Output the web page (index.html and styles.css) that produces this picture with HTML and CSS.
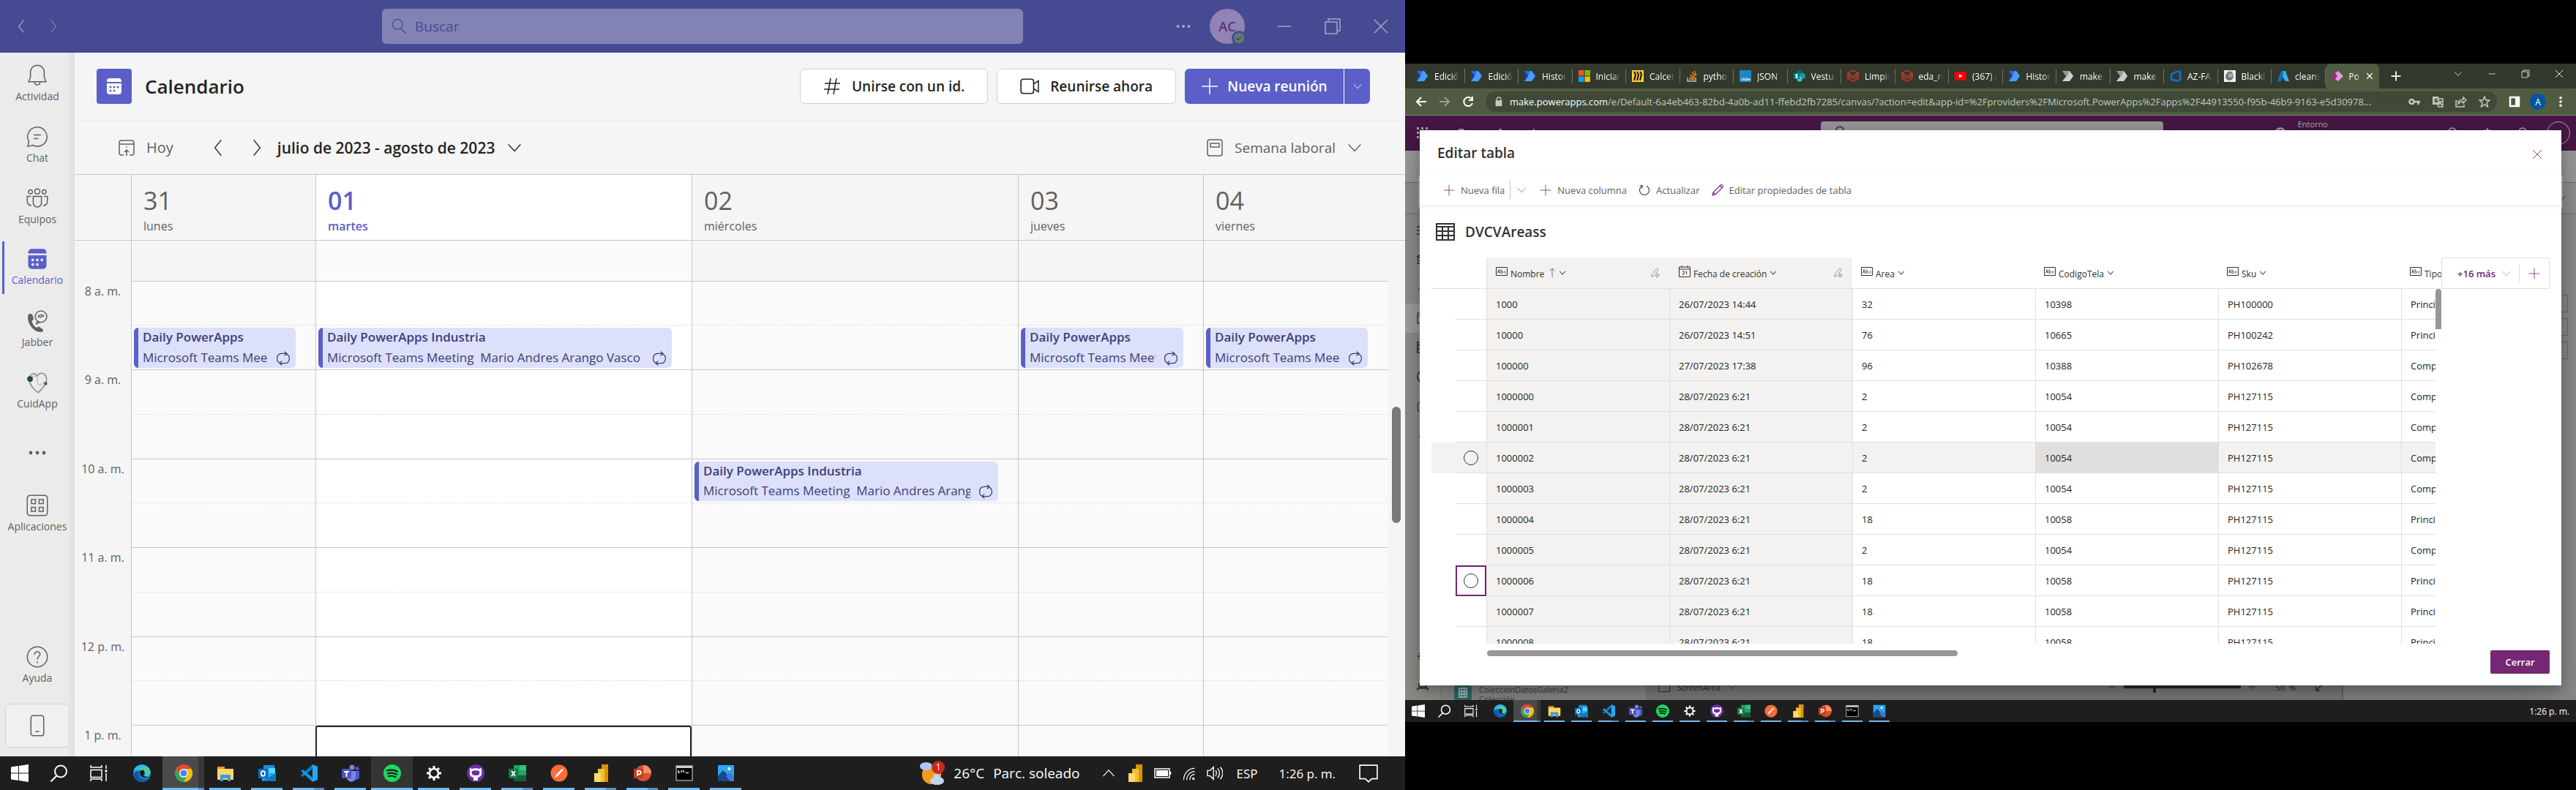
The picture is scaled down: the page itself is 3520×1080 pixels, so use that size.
FILE: index.html
```html
<!DOCTYPE html>
<html lang="es">
<head>
<meta charset="utf-8">
<title>Calendario y Power Apps</title>
<link rel="stylesheet" href="styles.css">
</head>
<body>
<svg class="sprite" aria-hidden="true">
  <symbol id="left" viewBox="0 0 24 24"><path d="M16 2 8 12l8 10"/></symbol>
  <symbol id="right" viewBox="0 0 24 24"><path d="m8 2 8 10-8 10"/></symbol>
  <symbol id="down" viewBox="0 0 24 24"><path d="m3 7 9 10 9-10"/></symbol>
  <symbol id="up" viewBox="0 0 24 24"><path d="m3 17 9-10 9 10"/></symbol>
  <symbol id="plus" viewBox="0 0 24 24"><path d="M12 1v22M1 12h22"/></symbol>
  <symbol id="close" viewBox="0 0 24 24"><path d="m3 3 18 18M21 3 3 21"/></symbol>
  <symbol id="minus" viewBox="0 0 24 24"><path d="M3 12h18"/></symbol>
  <symbol id="restore" viewBox="0 0 24 24"><path d="M2 6h16v16H2zM6 6V2h16v16h-4"/></symbol>
  <symbol id="search" viewBox="0 0 24 24"><circle cx="10" cy="9" r="7.5"/><path d="m15 15 8 8"/></symbol>
  <symbol id="dots" viewBox="0 0 24 24"><g fill="currentColor" stroke="none"><circle cx="3" cy="12" r="2.4"/><circle cx="12" cy="12" r="2.4"/><circle cx="21" cy="12" r="2.4"/></g></symbol>
  <symbol id="vdots" viewBox="0 0 24 24"><g fill="currentColor" stroke="none"><circle cx="12" cy="3" r="3"/><circle cx="12" cy="12" r="3"/><circle cx="12" cy="21" r="3"/></g></symbol>
  <symbol id="bell" viewBox="0 0 24 24"><path d="M12 1c-4.500 0-7.500 3.400-7.500 7.500V14L2.500 19h19l-2-5V8.500C19.500 4.400 16.500 1 12 1zM9 19c0 2 1.200 3.500 3 3.500s3-1.500 3-3.500"/></symbol>
  <symbol id="chat" viewBox="0 0 24 24"><path d="M12 1.500a10.500 10.500 0 1 1-5 19.700L1.500 22.500l1.300-5.300A10.500 10.500 0 0 1 12 1.500zM8 10h8M8 14h5"/></symbol>
  <symbol id="people" viewBox="0 0 24 24"><circle cx="12" cy="4.500" r="2.800"/><circle cx="4.500" cy="5" r="2.200"/><circle cx="19.500" cy="5" r="2.200"/><path d="M7.500 10h9v7a4.500 4.500 0 0 1-9 0zM5 10H1v5.500a4.500 4.500 0 0 0 4.500 4.500M19 10h4v5.500a4.500 4.500 0 0 1-4.500 4.500"/></symbol>
  <symbol id="cal" viewBox="0 0 24 24"><path d="M2 6V5a4 4 0 0 1 4-4h12a4 4 0 0 1 4 4v1zM2 8h20v11a4 4 0 0 1-4 4H6a4 4 0 0 1-4-4z" fill="currentColor" stroke="none"/><g fill="var(--dot)" stroke="none"><circle cx="7" cy="13" r="1.500"/><circle cx="12" cy="13" r="1.500"/><circle cx="17" cy="13" r="1.500"/><circle cx="7" cy="18" r="1.500"/><circle cx="12" cy="18" r="1.500"/></g></symbol>
  <symbol id="phone" viewBox="0 0 24 24"><path d="M2 5c2-2 5-1 5 1l1 4-2 2c1 4 3 6 5 7l3-1 4 3c1 1 0 3-2 3C7 24 0 13 2 5z" fill="currentColor" stroke="none"/><circle cx="16" cy="7" r="6.300"/><path d="m12 12-1 3 4-2M13 8c0-3 5-4 6-1M14 8l4-1"/></symbol>
  <symbol id="care" viewBox="0 0 24 24"><path d="M3 7c2-6 7-6 9-2 2-4 8-5 10 2 1 6-4 11-9 16C7 19 3 13 3 7z" stroke="#8b8b8b" stroke-width="1.200"/><path d="M6 7c2-4 6-3 6 2s3 9 6 3" stroke="#c0c0c0"/><circle cx="4" cy="8" r="2.500" fill="#1d5560" stroke="#1b3b40"/><circle cx="21" cy="13" r="1.300" fill="#555"/></symbol>
  <symbol id="apps" viewBox="0 0 24 24"><rect x="1" y="1" width="22" height="22" rx="3"/><rect x="5.500" y="5.500" width="4.500" height="4.500"/><rect x="14" y="5.500" width="4.500" height="4.500"/><rect x="5.500" y="14" width="4.500" height="4.500"/><rect x="14" y="14" width="4.500" height="4.500"/></symbol>
  <symbol id="help" viewBox="0 0 24 24"><circle cx="12" cy="12" r="11"/><path d="M9 9.500c0-4 6-4 6-.5 0 2.500-3 2.500-3 6M12 17v1.800"/></symbol>
  <symbol id="mobile" viewBox="0 0 24 24"><rect x="5" y="1" width="14" height="22" rx="2.500"/><path d="M10 18.500h4"/></symbol>
  <symbol id="today" viewBox="0 0 24 24"><path d="M8 22H5a3 3 0 0 1-3-3V5a3 3 0 0 1 3-3h14a3 3 0 0 1 3 3v14a3 3 0 0 1-3 3h-3M2 7h20M12 23v-8M9 18l3-3 3 3M12 10v1.500"/></symbol>
  <symbol id="week" viewBox="0 0 24 24"><rect x="2" y="1" width="20" height="22" rx="3"/><path d="M6 6h12v5H6z"/></symbol>
  <symbol id="hash" viewBox="0 0 24 24"><path d="M10 1 6 23M18 1l-4 22M2 8h21M1 16h21"/></symbol>
  <symbol id="camera" viewBox="0 0 24 24"><rect x="1" y="3" width="16" height="18" rx="3"/><path d="m17 9 6-4v14l-6-4"/></symbol>
  <symbol id="repeat" viewBox="0 0 24 24"><path d="M7 19.500a6.500 6.500 0 0 1-5-6.500V11a7 7 0 0 1 7-7h8M14 1l4 3-4 4M17 5a7 7 0 0 1 5 7v1a7 7 0 0 1-7 7H7M10 16l-4 4 4 3"/></symbol>

  <symbol id="win" viewBox="0 0 24 24"><path d="m0 3.500 10-1.400V11.500H0zM11 2l13-2v11.500H11zM0 12.500h10V22L0 20.500zM11 12.500h13V24l-13-1.900z" fill="#fff" stroke="none"/></symbol>
  <symbol id="find" viewBox="0 0 24 24"><circle cx="14" cy="9.500" r="8" stroke="#fff" stroke-width="2"/><path d="m8.500 15.500-8 8" stroke="#fff" stroke-width="2"/></symbol>
  <symbol id="views" viewBox="0 0 24 24"><path d="M1 1v3h15V1M1 7.500h15v10H1zM1 23v-3h15v3M22 1v5M22 12v11" stroke="#fff" stroke-width="1.500"/><path d="M20.500 7.500h3v3h-3z" fill="#fff" stroke="none"/></symbol>
  <symbol id="edge" viewBox="0 0 24 24"><g stroke="none"><circle cx="12" cy="12" r="12" fill="#1585d8"/><path d="M1 8C4-1 21-3 23.500 10c.5 5-4 7-8 6 2-3 0-8-4-8C6 7 2 9 1 8z" fill="#4ccf9a"/><path d="M1 8c3-9 15-10 20-3C14 2 8 5 1 10z" fill="#2fb7e8"/><path d="M8 10c-2 7 3 12 12 10-6 7-18 4-19-6 1-4 5-5 7-4z" fill="#0e58a8"/><path d="M14 8c-5-1-6 3-4 7 3 4 8 4 13 2-4 1-9 0-9-3 2-1 2-4 0-6z" fill="#1c1c1c"/></g></symbol>
  <symbol id="chrome" viewBox="0 0 24 24"><g stroke="none"><circle cx="12" cy="12" r="12" fill="#34a853"/><path d="M1.600 6A12 12 0 0 1 22.400 6H12a6 6 0 0 0-5.500 8z" fill="#ea4335"/><path d="M22.400 6A12 12 0 0 1 12 24l5.200-9A6 6 0 0 0 12 6z" fill="#fbbc05"/><circle cx="12" cy="12" r="6" fill="#fff"/><circle cx="12" cy="12" r="4.600" fill="#4285f4"/></g></symbol>
  <symbol id="folder" viewBox="0 0 24 24"><g stroke="none"><path d="M1 3h10v5H1z" fill="#e0a010"/><path d="M1 6h22v15H1z" fill="#ffd769"/><path d="M5 14h14v9h-4v-4h-6v4H5z" fill="#3f9bde"/></g></symbol>
  <symbol id="outlook" viewBox="0 0 24 24"><g stroke="none"><path d="M7 1h15v12H7z" fill="#1490df"/><path d="M14 5h9v7h-9z" fill="#50d9ff"/><path d="M5 12h19v11H5z" fill="#28a8ea"/><path d="m5 23 19-11v11z" fill="#0f78c8"/><path d="M0 6h13v13H0z" fill="#0f6cbd"/><ellipse cx="6.500" cy="12.500" rx="2.600" ry="3.300" fill="none" stroke="#fff" stroke-width="1.800"/></g></symbol>
  <symbol id="vscode" viewBox="0 0 24 24"><g stroke="none"><path d="m17 0 7 3v18l-7 3z" fill="#25a9f2"/><path d="M17 0v6L4 17l-3-2z" fill="#0a7bc7"/><path d="M17 24v-6L4 7 1 9z" fill="#1593dd"/></g></symbol>
  <symbol id="teams" viewBox="0 0 24 24"><g stroke="none"><circle cx="14" cy="4" r="3.500" fill="#7b83eb"/><circle cx="21" cy="5.500" r="2.500" fill="#5059c9"/><path d="M17 9h7v8c0 4-5 5-7 3z" fill="#5059c9"/><path d="M7 9h12v9c0 8-12 7-12 0z" fill="#7b83eb"/><path d="M0 6h13v13H0z" fill="#4b53bc"/><path d="M3 9h7v2H7.500v6h-2v-6H3z" fill="#fff"/></g></symbol>
  <symbol id="spotify" viewBox="0 0 24 24"><circle cx="12" cy="12" r="12" fill="#1ed760" stroke="none"/><path d="M5 8.500c5-1.600 10-1 14 1.300M6 12.500c4-1.200 8.500-.8 12 1.200M7 16.200c3.500-.9 6.500-.5 9.500 1" stroke="#191919" stroke-width="2.200" stroke-linecap="round"/></symbol>
  <symbol id="gear" viewBox="0 0 24 24"><circle cx="12" cy="12" r="6" stroke="currentColor" stroke-width="2.500"/><path d="M12 2v4M12 18v4M2 12h4M18 12h4M5 5l3 3M16 16l3 3M19 5l-3 3M8 16l-3 3" stroke="currentColor" stroke-width="3"/></symbol>
  <symbol id="github" viewBox="0 0 24 24"><circle cx="12" cy="12" r="12" fill="#6e2ca3" stroke="none"/><path d="M9 22v-4c-4-1-6-4-5-8V5l3 1c3-1 7-1 10 0l3-1v5c1 4-1 7-5 8v4z" fill="#fff" stroke="none"/><path d="M7 9c3-1 7-1 10 0 1 4 0 6-5 6s-6-2-5-6z" fill="#6e2ca3" stroke="none"/></symbol>
  <symbol id="excel" viewBox="0 0 24 24"><g stroke="none"><path d="M7 1h17v22H7z" fill="#21a366"/><path d="M15 1h9v7h-9z" fill="#33c481"/><path d="M7 15h17v8H7z" fill="#185c37"/><path d="M0 6h13v13H0z" fill="#107c41"/></g><path d="m4 9 5 7M9 9l-5 7" stroke="#fff" stroke-width="1.800"/></symbol>
  <symbol id="postman" viewBox="0 0 24 24"><circle cx="12" cy="12" r="11.500" fill="#ff6c37" stroke="none"/><path d="m6 18 2-4 8-8 2 1-8 9z" fill="#fff" stroke="none"/></symbol>
  <symbol id="powerbi" viewBox="0 0 24 24"><g stroke="none"><path d="M13 0h9v24h-9z" fill="#d9920a"/><path d="M8 6h9v18H8z" fill="#f0c02c"/><path d="M3 12h9v12H3z" fill="#f9dc6c"/></g></symbol>
  <symbol id="ppt" viewBox="0 0 24 24"><g stroke="none"><circle cx="13" cy="12" r="11" fill="#d35230"/><path d="M13 1a11 11 0 0 1 11 11H13z" fill="#ff8f6b"/><path d="M0 6h13v13H0z" fill="#c43e1c"/></g><path d="M5 16V9h2.500a2 2 0 0 1 0 4.500H5" stroke="#fff" stroke-width="1.800"/></symbol>
  <symbol id="cmd" viewBox="0 0 24 24"><path d="M1 2h22v20H1z" fill="#000" stroke="#9a9a9a"/><path d="M1 2h22v3H1z" fill="#cfcfcf" stroke="none"/><path d="M4 8v3h2M8 8v3M10 8l2 3M14 11.500h4" stroke="#ddd"/></symbol>
  <symbol id="photos" viewBox="0 0 24 24"><g stroke="none"><path d="M1 1h22v22H1z" fill="#2aa7ee"/><path d="m1 16 7-8 15 15H1z" fill="#164a8b"/><path d="m12 16 5-5 6 5v7h-5z" fill="#4076d8"/><circle cx="16.500" cy="6" r="2" fill="#fff"/></g></symbol>

  <symbol id="weather" viewBox="0 0 36 36"><g stroke="none"><circle cx="18" cy="20" r="14" fill="#f59a1c"/><ellipse cx="10" cy="8" rx="9" ry="6" fill="#a9c9f2"/><ellipse cx="26" cy="29" rx="10" ry="6" fill="#bfd6f6"/><circle cx="25" cy="24" r="5" fill="#bfd6f6"/></g></symbol>
  <symbol id="battery" viewBox="0 0 24 24"><path d="M1 6h20v12H1zM22.500 10v4"/><path d="M3 8h16v8H3z" fill="currentColor" stroke="none"/></symbol>
  <symbol id="wifi" viewBox="0 0 24 24"><path d="M3 23C3 12 11 4 21 4M8 23c0-8 6-14 13-14M13 23c0-5 3-9 8-9"/><circle cx="19" cy="21" r="2" fill="currentColor" stroke="none"/></symbol>
  <symbol id="sound" viewBox="0 0 24 24"><path d="M1 8h4l5-5v18l-5-5H1zM13 8c2 2 2 6 0 8M16 5c4 4 4 10 0 14M20 3c5 5 5 13 0 18"/></symbol>
  <symbol id="note" viewBox="0 0 24 24"><path d="M1 2h22v17h-7l-4 4-4-4H1z"/></symbol>

  <symbol id="flow" viewBox="0 0 16 16"><g stroke="none"><path d="M0 1h10l5 7-5 7H0l5-7z" fill="#1f6bf0"/><path d="M5 8 8 1h2l5 7-5 7H0z" fill="#4a9bff"/><path d="m0 1 5 7-3 4-2 3z" fill="#1240b8" opacity=".6"/></g></symbol>
  <symbol id="flowgrey" viewBox="0 0 16 16"><g stroke="none"><path d="M0 1h10l5 7-5 7H0l5-7z" fill="#9a9a9a"/><path d="m10 1 5 7-5 7H0l7-7z" fill="#cfcfcf"/></g></symbol>
  <symbol id="ms" viewBox="0 0 16 16"><g stroke="none"><path d="M0 0h7.500v7.500H0z" fill="#f25022"/><path d="M8.500 0H16v7.500H8.500z" fill="#7fba00"/><path d="M0 8.500h7.500V16H0z" fill="#00a4ef"/><path d="M8.500 8.500H16V16H8.500z" fill="#ffb900"/></g></symbol>
  <symbol id="miro" viewBox="0 0 16 16"><path d="M0 0h16v16H0z" fill="#ffd02f" stroke="none"/><path d="m3 2 2 4-2 8M7 2l2 4-2 8M11 2l2 3-2 9" stroke="#111" stroke-width="2"/></symbol>
  <symbol id="stack" viewBox="0 0 16 16"><path d="M2 10v5h11v-5" stroke="#bcbbbb" stroke-width="1.500"/><path d="M4 12.500h7M4.500 10l7 1M5.500 6.500l6 3M8 3l5 5M11 1l3 6" stroke="#f48024" stroke-width="1.500"/></symbol>
  <symbol id="json" viewBox="0 0 16 16"><path d="M0 0h16v16H0z" fill="#1d86c8" stroke="none"/><path d="M3 11v3H2M7 11H5v1.500h2V14H5M8.500 11h2v3h-2zM12 14v-3l2 3v-3" stroke="#fff" stroke-width=".8"/></symbol>
  <symbol id="sharepoint" viewBox="0 0 16 16"><g stroke="none"><circle cx="8" cy="5" r="5" fill="#036c70"/><circle cx="12" cy="8" r="4" fill="#1a9ba1"/><circle cx="8" cy="12" r="3.500" fill="#37c6d0"/><path d="M0 4h8v8H0z" fill="#03787c"/></g><path d="M5.500 6C3 5 2 7 4 8s1 3-1.500 2" stroke="#fff"/></symbol>
  <symbol id="bricks" viewBox="0 0 16 16"><path d="m1 4 7 4 7-4-7-4zM1 4v3l7 4 7-4V4M1 8v3l7 4 7-4V8" stroke="#d83b2b" stroke-width="1.400"/></symbol>
  <symbol id="youtube" viewBox="0 0 16 16"><rect y="2" width="16" height="12" rx="3" fill="#f00" stroke="none"/><path d="M6 5.500v5L11 8z" fill="#fff" stroke="none"/></symbol>
  <symbol id="devops" viewBox="0 0 16 16"><path d="M14 2v11l-4 2-5-2H2V6l7-4z" stroke="#0078d7" stroke-width="2.500"/></symbol>
  <symbol id="bb" viewBox="0 0 16 16"><path d="M0 0h16v16H0z" fill="#f2f2f2" stroke="none"/><path d="M4 4c3-4 8-3 8 1 3 5-1 9-5 9S0 9 4 4z" fill="#777" stroke="none"/><circle cx="9" cy="7" r="3" fill="#aaa" stroke="none"/></symbol>
  <symbol id="azure" viewBox="0 0 16 16"><g stroke="none"><path d="M5 1h4L5 15H0z" fill="#0f6fc0"/><path d="M8 1h3l5 14h-5L7 9z" fill="#35b1f0"/></g></symbol>
  <symbol id="papps" viewBox="0 0 16 16"><g stroke="none"><path d="m6 1 5 7-5 7-6-7z" fill="#a4268f"/><path d="m9 1 7 7-7 7-4-3 3-4-3-4z" fill="#e59ae0"/></g></symbol>

  <symbol id="aback" viewBox="0 0 16 16"><path d="M15 8H2M8 2 2 8l6 6"/></symbol>
  <symbol id="afwd" viewBox="0 0 16 16"><path d="M1 8h13M8 2l6 6-6 6"/></symbol>
  <symbol id="reload" viewBox="0 0 16 16"><path d="M13.500 5A6 6 0 1 0 14 10M14 1v5H9"/></symbol>
  <symbol id="lock" viewBox="0 0 16 16"><path d="M3 6h10v9H3z" fill="currentColor" stroke="none"/><path d="M5 7V4a3 3 0 0 1 6 0v3"/></symbol>
  <symbol id="key" viewBox="0 0 16 16"><circle cx="4.500" cy="8" r="3" stroke-width="2.500"/><path d="M8 8h8M13.500 8v4" stroke-width="2.500"/></symbol>
  <symbol id="translate" viewBox="0 0 16 16"><path d="M1 1h8l2 11H1z" fill="currentColor" stroke="none"/><path d="M9 4h6v11H9l-1-3M10 8h4M12 7v1c0 2-1 3-2 4M11 9l3 4"/><path d="M7.500 5a2 2 0 1 0 0 3V7H6" stroke="#404937"/></symbol>
  <symbol id="share" viewBox="0 0 16 16"><path d="M3 7H1v8h11v-3M4 11c0-4 3-6 7-6V2l4 4-4 4V8c-3 0-5 0-7 3z"/></symbol>
  <symbol id="star" viewBox="0 0 16 16"><path d="m8 1 2 5h5l-4 3.500L12.500 15 8 12l-4.500 3L5 9.500 1 6h5z"/></symbol>
  <symbol id="panel" viewBox="0 0 16 16"><path d="M2 2h12v12H2z" stroke-width="2.500"/><path d="M9 2h5v12H9z" fill="currentColor" stroke="none"/></symbol>
  <symbol id="waffle" viewBox="0 0 16 16"><g fill="currentColor" stroke="none"><path d="M0 0h3v3H0zM6 0h3v3H6zM12 0h3v3h-3zM0 6h3v3H0zM6 6h3v3H6zM12 6h3v3h-3zM0 12h3v3H0zM6 12h3v3H6zM12 12h3v3h-3z"/></g></symbol>
  <symbol id="globe" viewBox="0 0 16 16"><circle cx="8" cy="8" r="7"/><path d="M1 8h14M8 1c-5 4-5 10 0 14M8 1c5 4 5 10 0 14"/></symbol>
  <symbol id="ring" viewBox="0 0 16 16"><circle cx="8" cy="6" r="5"/><path d="M8 11v4"/></symbol>

  <symbol id="refresh" viewBox="0 0 16 16"><path d="M5 2.200A6.500 6.500 0 1 0 11 2.200M1.500 1.500H5v4"/></symbol>
  <symbol id="pencil" viewBox="0 0 16 16"><path d="m1 15 1-4L12 1c2-1 4 1 3 3L5 14zM11 2l3 3M2 11l3 3"/></symbol>
  <symbol id="grid" viewBox="0 0 26 24"><path d="M1 1h24v22H1zM1 5h24M1 11h24M1 17h24M9 5v18M17 5v18" stroke-width="2"/></symbol>
  <symbol id="abc" viewBox="0 0 16 12"><path d="M.500.500h15v11H.500z"/><path d="m2.500 8.500 1.500-5 1.500 5M3 7h2M7 3v5.500h1.500c1.500 0 1.500-3 0-3H7M13.500 5.800c-2.500-1-2.500 3.400 0 2.500" stroke-width=".8"/></symbol>
  <symbol id="date" viewBox="0 0 16 16"><path d="M.500 2h15v13.500H.500zM.500 5h15M4 0v3M12 0v3"/><path d="M5 8h2.500v2L5 12h2.500M10.500 12V8L9.500 9" stroke-width=".9"/></symbol>
  <symbol id="arrowup" viewBox="0 0 16 16"><path d="M8 15V1M4 5l4-4 4 4"/></symbol>
  <symbol id="editlock" viewBox="0 0 16 16"><path d="m2 14 1-4 6-8c2-2 4 0 3 2l-4 6M2 14l5-2"/><circle cx="11" cy="12" r="2.500"/><path d="m9.500 13.500 3-3"/></symbol>
  <symbol id="menu" viewBox="0 0 16 16"><path d="M0 3h16M0 8h16M0 13h16"/></symbol>
  <symbol id="layers" viewBox="0 0 16 16"><path d="m0 4 8-4 8 4-8 4zM0 8l8 4 8-4M0 12l8 4 8-4"/></symbol>
  <symbol id="box" viewBox="0 0 16 16"><path d="M1 1h14v14H1zM1 5h14"/></symbol>
  <symbol id="film" viewBox="0 0 16 16"><path d="M1 1h14v14H1zM5 1v14M1 5h4M1 10h4"/></symbol>
  <symbol id="fx" viewBox="0 0 16 16"><path d="M4 1C0 5 0 11 4 15M12 1c4 4 4 10 0 14M6 5l5 6M11 5l-5 6"/></symbol>
  <symbol id="bot" viewBox="0 0 16 16"><path d="M3 6h10v4H3zM5 6V3h6v3M1 15v-3h14v3M5 10v2M11 10v2"/></symbol>
  <symbol id="table" viewBox="0 0 16 16"><path d="M2 1h12v14H2zM2 6h12M2 10h12M6 1v14M10 1v14"/></symbol>
  <symbol id="expand" viewBox="0 0 16 16"><path d="M15 1 2 14M2 8v6h6" stroke-width="1.500"/></symbol>
</svg>

<main class="desk">
<section class="screen teams" aria-label="Microsoft Teams">
  <header class="titlebar">
    <div class="history"><button aria-label="Atrás"><svg class="i20"><use href="#left"/></svg></button><button class="faint" aria-label="Adelante"><svg class="i20"><use href="#right"/></svg></button></div>
    <label class="finder"><svg class="i22"><use href="#search"/></svg><input type="search" placeholder="Buscar" aria-label="Buscar"></label>
    <div class="winctl">
      <button aria-label="Más"><svg class="i20"><use href="#dots"/></svg></button>
      <span class="avatar">AC<svg class="presence" viewBox="0 0 20 20"><circle cx="10" cy="10" r="8.500" fill="#5c8069" stroke="#464a92" stroke-width="3"/><path d="m6.500 10 2.500 2.500 4-4.500"/></svg></span>
      <button aria-label="Minimizar"><svg class="i24"><use href="#minus"/></svg></button>
      <button aria-label="Restaurar"><svg class="i24"><use href="#restore"/></svg></button>
      <button aria-label="Cerrar ventana"><svg class="i24"><use href="#close"/></svg></button>
    </div>
  </header>

  <div class="work">
    <nav class="rail">
      <a href="#"><svg><use href="#bell"/></svg>Actividad</a>
      <a href="#"><svg><use href="#chat"/></svg>Chat</a>
      <a href="#"><svg><use href="#people"/></svg>Equipos</a>
      <a href="#" class="on"><svg><use href="#cal"/></svg>Calendario</a>
      <a href="#"><svg><use href="#phone"/></svg>Jabber</a>
      <a href="#"><svg><use href="#care"/></svg>CuidApp</a>
      <a href="#" class="more" aria-label="Más aplicaciones"><svg><use href="#dots"/></svg></a>
      <a href="#"><svg><use href="#apps"/></svg>Aplicaciones</a>
      <a href="#" class="bottom"><svg><use href="#help"/></svg>Ayuda</a>
      <button class="device" aria-label="Descargar aplicación móvil"><svg><use href="#mobile"/></svg></button>
    </nav>

    <div class="calendar">
      <header class="calhead">
        <span class="tile"><svg class="i24"><use href="#cal"/></svg></span>
        <h1>Calendario</h1>
        <button class="btn"><svg class="i24"><use href="#hash"/></svg>Unirse con un id.</button>
        <button class="btn"><svg class="i26"><use href="#camera"/></svg>Reunirse ahora</button>
        <div class="split"><button class="new"><svg class="i24"><use href="#plus"/></svg>Nueva reunión</button><button class="caret" aria-label="Más opciones"><svg class="i14"><use href="#down"/></svg></button></div>
      </header>
      <div class="calbar">
        <button class="ghost"><svg class="i24"><use href="#today"/></svg>Hoy</button>
        <div class="pager"><button aria-label="Semana anterior"><svg class="i26"><use href="#left"/></svg></button><button aria-label="Semana siguiente"><svg class="i26"><use href="#right"/></svg></button></div>
        <button class="range">julio de 2023 - agosto de 2023<svg class="i22"><use href="#down"/></svg></button>
        <button class="ghost view"><svg class="i24"><use href="#week"/></svg>Semana laboral<svg class="i22"><use href="#down"/></svg></button>
      </div>
      <div class="days">
        <span></span>
        <div class="day"><b>31</b>lunes</div>
        <div class="day now"><b>01</b>martes</div>
        <div class="day"><b>02</b>miércoles</div>
        <div class="day"><b>03</b>jueves</div>
        <div class="day"><b>04</b>viernes</div>
      </div>
      <div class="week">
        <div class="hours"><span>8 a. m.</span><span>9 a. m.</span><span>10 a. m.</span><span>11 a. m.</span><span>12 p. m.</span><span>1 p. m.</span></div>
        <div class="col">
          <div class="pre"></div>
          <div class="hour"><i></i><i><a href="#" class="event"><strong>Daily PowerApps</strong><span>Microsoft Teams Meeting</span><svg><use href="#repeat"/></svg></a></i></div>
          <div class="hour"><i></i><i></i></div><div class="hour"><i></i><i></i></div><div class="hour"><i></i><i></i></div><div class="hour"><i></i><i></i></div><div class="hour"><i></i><i></i></div>
        </div>
        <div class="col now">
          <div class="pre"></div>
          <div class="hour"><i></i><i><a href="#" class="event"><strong>Daily PowerApps Industria</strong><span>Microsoft Teams Meeting&nbsp; Mario Andres Arango Vasco</span><svg><use href="#repeat"/></svg></a></i></div>
          <div class="hour"><i></i><i></i></div><div class="hour"><i></i><i></i></div><div class="hour"><i></i><i></i></div><div class="hour"><i></i><i></i></div><div class="hour picked"><i></i><i></i></div>
        </div>
        <div class="col">
          <div class="pre"></div>
          <div class="hour"><i></i><i></i></div><div class="hour"><i></i><i></i></div>
          <div class="hour"><i><a href="#" class="event"><strong>Daily PowerApps Industria</strong><span>Microsoft Teams Meeting&nbsp; Mario Andres Arango Vasco</span><svg><use href="#repeat"/></svg></a></i><i></i></div>
          <div class="hour"><i></i><i></i></div><div class="hour"><i></i><i></i></div><div class="hour"><i></i><i></i></div>
        </div>
        <div class="col">
          <div class="pre"></div>
          <div class="hour"><i></i><i><a href="#" class="event"><strong>Daily PowerApps</strong><span>Microsoft Teams Meeting</span><svg><use href="#repeat"/></svg></a></i></div>
          <div class="hour"><i></i><i></i></div><div class="hour"><i></i><i></i></div><div class="hour"><i></i><i></i></div><div class="hour"><i></i><i></i></div><div class="hour"><i></i><i></i></div>
        </div>
        <div class="col">
          <div class="pre"></div>
          <div class="hour"><i></i><i><a href="#" class="event"><strong>Daily PowerApps</strong><span>Microsoft Teams Meeting</span><svg><use href="#repeat"/></svg></a></i></div>
          <div class="hour"><i></i><i></i></div><div class="hour"><i></i><i></i></div><div class="hour"><i></i><i></i></div><div class="hour"><i></i><i></i></div><div class="hour"><i></i><i></i></div>
        </div>
        <div class="track"><div class="thumb"></div></div>
      </div>
    </div>
  </div>

  <footer class="taskbar">
    <button class="sys" aria-label="Inicio"><svg><use href="#win"/></svg></button><button class="sys" aria-label="Búsqueda"><svg><use href="#find"/></svg></button><button class="sys" aria-label="Vista de tareas"><svg><use href="#views"/></svg></button>
    <button class="app first" aria-label="Edge"><svg><use href="#edge"/></svg></button>
    <button class="app run multi active" aria-label="Chrome"><svg><use href="#chrome"/></svg></button>
    <button class="app run" aria-label="Explorador"><svg><use href="#folder"/></svg></button>
    <button class="app run" aria-label="Outlook"><svg><use href="#outlook"/></svg></button>
    <button class="app run multi" aria-label="Visual Studio Code"><svg><use href="#vscode"/></svg></button>
    <button class="app run" aria-label="Teams"><svg><use href="#teams"/></svg></button>
    <button class="app run hot" aria-label="Spotify"><svg><use href="#spotify"/></svg></button>
    <button class="app run" aria-label="Configuración"><svg><use href="#gear"/></svg></button>
    <button class="app run" aria-label="GitHub"><svg><use href="#github"/></svg></button>
    <button class="app run multi" aria-label="Excel"><svg><use href="#excel"/></svg></button>
    <button class="app run" aria-label="Postman"><svg><use href="#postman"/></svg></button>
    <button class="app run multi" aria-label="Power BI"><svg><use href="#powerbi"/></svg></button>
    <button class="app run multi" aria-label="PowerPoint"><svg><use href="#ppt"/></svg></button>
    <button class="app run" aria-label="Símbolo del sistema"><svg><use href="#cmd"/></svg></button>
    <button class="app run" aria-label="Fotos"><svg><use href="#photos"/></svg></button>
    <div class="tray">
      <button class="weather"><span class="wicon"><svg><use href="#weather"/></svg><em>1</em></span><span>26°C</span><span>Parc. soleado</span></button>
      <svg class="i20"><use href="#up"/></svg><svg class="i24"><use href="#powerbi"/></svg><svg class="i24"><use href="#battery"/></svg><svg class="i20"><use href="#wifi"/></svg><svg class="i22"><use href="#sound"/></svg>
      <span class="lang">ESP</span><time>1:26 p. m.</time><svg class="i26"><use href="#note"/></svg>
    </div>
  </footer>
</section>

<section class="screen browser" aria-label="Chrome">
  <header class="strip">
    <div class="tabs">
      <a href="#"><svg><use href="#flow"/></svg><span>Edición</span></a>
      <a href="#"><svg><use href="#flow"/></svg><span>Edición</span></a>
      <a href="#"><svg><use href="#flow"/></svg><span>Historial</span></a>
      <a href="#"><svg><use href="#ms"/></svg><span>Iniciar</span></a>
      <a href="#"><svg><use href="#miro"/></svg><span>Calcetines</span></a>
      <a href="#"><svg><use href="#stack"/></svg><span>python</span></a>
      <a href="#"><svg><use href="#json"/></svg><span>JSON C</span></a>
      <a href="#"><svg><use href="#sharepoint"/></svg><span>Vestuario</span></a>
      <a href="#"><svg><use href="#bricks"/></svg><span>Limpieza</span></a>
      <a href="#"><svg><use href="#bricks"/></svg><span>eda_re</span></a>
      <a href="#"><svg><use href="#youtube"/></svg><span>(367) A</span></a>
      <a href="#"><svg><use href="#flow"/></svg><span>Historial</span></a>
      <a href="#"><svg><use href="#flowgrey"/></svg><span>make.p</span></a>
      <a href="#"><svg><use href="#flowgrey"/></svg><span>make.p</span></a>
      <a href="#"><svg><use href="#devops"/></svg><span>AZ-FA</span></a>
      <a href="#"><svg><use href="#bb"/></svg><span>Blackb</span></a>
      <a href="#"><svg><use href="#azure"/></svg><span>cleans</span></a>
      <a href="#" class="on"><svg><use href="#papps"/></svg><span>Po</span><svg class="x"><use href="#close"/></svg></a>
    </div>
    <div class="ctl"><button aria-label="Nueva pestaña" class="add"><svg class="i14"><use href="#plus"/></svg></button><button aria-label="Buscar pestañas"><svg class="i12"><use href="#down"/></svg></button><button aria-label="Minimizar"><svg class="i12"><use href="#minus"/></svg></button><button aria-label="Restaurar"><svg class="i12"><use href="#restore"/></svg></button><button aria-label="Cerrar navegador"><svg class="i14"><use href="#close"/></svg></button></div>
  </header>
  <div class="urlbar">
    <button aria-label="Atrás"><svg class="i16"><use href="#aback"/></svg></button><button class="faint" aria-label="Adelante"><svg class="i16"><use href="#afwd"/></svg></button><button aria-label="Recargar"><svg class="i16"><use href="#reload"/></svg></button>
    <div class="omni"><svg class="i14"><use href="#lock"/></svg><a href="#"><b>make.powerapps.com</b>/e/Default-6a4eb463-82bd-4a0b-ad11-ffebd2fb7285/canvas/?action=edit&amp;app-id=%2Fproviders%2FMicrosoft.PowerApps%2Fapps%2F44913550-f95b-46b9-9163-e5d30978...</a>
      <svg class="i16"><use href="#key"/></svg><svg class="i16"><use href="#translate"/></svg><svg class="i16"><use href="#share"/></svg><svg class="i16"><use href="#star"/></svg></div>
    <button aria-label="Panel lateral"><svg class="i16"><use href="#panel"/></svg></button><button class="who">A</button><button aria-label="Menú"><svg class="i14"><use href="#vdots"/></svg></button>
  </div>

  <div class="stage">
    <div class="studio">
      <header class="brand"><svg class="i16"><use href="#waffle"/></svg><span class="name">Power Apps &nbsp;|</span><div class="seek"><svg class="i16"><use href="#ring"/></svg></div>
        <div class="env"><svg class="i16"><use href="#globe"/></svg><span>Entorno</span></div>
        <div class="acts"><svg class="i16"><use href="#ring"/></svg><svg class="i16"><use href="#gear"/></svg><svg class="i16"><use href="#ring"/></svg><i></i></div></header>
      <div class="bar one"></div>
      <div class="bar two"><svg class="i16"><use href="#down"/></svg></div>
      <div class="under">
        <div class="siderail">
          <svg><use href="#menu"/></svg><svg><use href="#layers"/></svg><svg><use href="#minus"/></svg><svg class="on"><use href="#box"/></svg><svg><use href="#film"/></svg><svg><use href="#fx"/></svg><svg><use href="#restore"/></svg><svg><use href="#up"/></svg>
          <svg class="low"><use href="#gear"/></svg><svg><use href="#bot"/></svg>
        </div>
        <div class="tree"><div class="source"><span class="teal"><svg class="i14"><use href="#table"/></svg></span><p>ColeccionDatosGaleria2<br>Colección</p></div></div>
        <div class="canvas"><div class="foot"><input type="checkbox" id="scr"><label for="scr">ScreenArea</label><svg class="i12"><use href="#down"/></svg>
          <svg class="i12 out"><use href="#minus"/></svg><input type="range" aria-label="Zoom" value="26"><svg class="i12"><use href="#plus"/></svg><span class="pct">50&nbsp; %</span><svg class="i14"><use href="#expand"/></svg></div></div>
        <div class="props"><i></i><i></i><i></i></div>
      </div>
    </div>

    <div class="modal" role="dialog" aria-label="Editar tabla">
      <header class="mhead"><h2>Editar tabla</h2><button aria-label="Cerrar diálogo"><svg class="i16"><use href="#close"/></svg></button></header>
      <div class="cmds">
        <button><svg class="i16"><use href="#plus"/></svg>Nueva fila</button><button class="drop" aria-label="Más filas"><svg class="i14"><use href="#down"/></svg></button>
        <button><svg class="i16"><use href="#plus"/></svg>Nueva columna</button>
        <button><svg class="i16"><use href="#refresh"/></svg>Actualizar</button>
        <button><svg class="i16"><use href="#pencil"/></svg>Editar propiedades de tabla</button>
      </div>
      <div class="tname"><svg><use href="#grid"/></svg><h3>DVCVAreass</h3></div>
      <div class="gridrow">
        <div class="gridbox">
          <table>
            <colgroup><col class="g"><col class="s"><col><col><col><col><col><col></colgroup>
            <thead><tr><th></th><th></th>
              <th class="k"><div><svg class="abc"><use href="#abc"/></svg>Nombre<svg class="i14 ar"><use href="#arrowup"/></svg><svg class="i10"><use href="#down"/></svg><svg class="i14 ed"><use href="#editlock"/></svg></div></th>
              <th class="k nb"><div><svg class="i16"><use href="#date"/></svg>Fecha de creación<svg class="i10"><use href="#down"/></svg><svg class="i14 ed"><use href="#editlock"/></svg></div></th>
              <th><div><svg class="abc"><use href="#abc"/></svg>Area<svg class="i10"><use href="#down"/></svg></div></th>
              <th><div><svg class="abc"><use href="#abc"/></svg>CodigoTela<svg class="i10"><use href="#down"/></svg></div></th>
              <th><div><svg class="abc"><use href="#abc"/></svg>Sku<svg class="i10"><use href="#down"/></svg></div></th>
              <th><div><svg class="abc"><use href="#abc"/></svg>Tipo</div></th></tr></thead>
            <tbody>
              <tr><td></td><td></td><td>1000</td><td>26/07/2023 14:44</td><td>32</td><td>10398</td><td>PH100000</td><td>Principal</td></tr>
              <tr><td></td><td></td><td>10000</td><td>26/07/2023 14:51</td><td>76</td><td>10665</td><td>PH100242</td><td>Principal</td></tr>
              <tr><td></td><td></td><td>100000</td><td>27/07/2023 17:38</td><td>96</td><td>10388</td><td>PH102678</td><td>Complemento</td></tr>
              <tr><td></td><td></td><td>1000000</td><td>28/07/2023 6:21</td><td>2</td><td>10054</td><td>PH127115</td><td>Complemento</td></tr>
              <tr><td></td><td></td><td>1000001</td><td>28/07/2023 6:21</td><td>2</td><td>10054</td><td>PH127115</td><td>Complemento</td></tr>
              <tr class="hover"><td></td><td><input type="radio" name="row" aria-label="Seleccionar 1000002"></td><td>1000002</td><td>28/07/2023 6:21</td><td>2</td><td class="cur">10054</td><td>PH127115</td><td>Complemento</td></tr>
              <tr><td></td><td></td><td>1000003</td><td>28/07/2023 6:21</td><td>2</td><td>10054</td><td>PH127115</td><td>Complemento</td></tr>
              <tr><td></td><td></td><td>1000004</td><td>28/07/2023 6:21</td><td>18</td><td>10058</td><td>PH127115</td><td>Principal</td></tr>
              <tr><td></td><td></td><td>1000005</td><td>28/07/2023 6:21</td><td>2</td><td>10054</td><td>PH127115</td><td>Complemento</td></tr>
              <tr><td></td><td class="focus"><input type="radio" name="row" aria-label="Seleccionar 1000006"></td><td>1000006</td><td>28/07/2023 6:21</td><td>18</td><td>10058</td><td>PH127115</td><td>Principal</td></tr>
              <tr><td></td><td></td><td>1000007</td><td>28/07/2023 6:21</td><td>18</td><td>10058</td><td>PH127115</td><td>Principal</td></tr>
              <tr><td></td><td></td><td>1000008</td><td>28/07/2023 6:21</td><td>18</td><td>10058</td><td>PH127115</td><td>Principal</td></tr>
            </tbody>
          </table>
          <div class="vtrack"></div>
        </div>
        <div class="extra"><button class="many">+16 más<svg class="i14"><use href="#down"/></svg></button><button class="addcol" aria-label="Nueva columna"><svg class="i16"><use href="#plus"/></svg></button></div>
      </div>
      <footer class="mfoot"><div class="hthumb"></div><button>Cerrar</button></footer>
    </div>
  </div>

  <footer class="taskbar small">
    <button class="sys" aria-label="Inicio"><svg><use href="#win"/></svg></button><button class="sys" aria-label="Búsqueda"><svg><use href="#find"/></svg></button><button class="sys" aria-label="Vista de tareas"><svg><use href="#views"/></svg></button>
    <button class="app first" aria-label="Edge"><svg><use href="#edge"/></svg></button>
    <button class="app run multi active" aria-label="Chrome"><svg><use href="#chrome"/></svg></button>
    <button class="app run" aria-label="Explorador"><svg><use href="#folder"/></svg></button>
    <button class="app run" aria-label="Outlook"><svg><use href="#outlook"/></svg></button>
    <button class="app run multi" aria-label="Visual Studio Code"><svg><use href="#vscode"/></svg></button>
    <button class="app run" aria-label="Teams"><svg><use href="#teams"/></svg></button>
    <button class="app run" aria-label="Spotify"><svg><use href="#spotify"/></svg></button>
    <button class="app run" aria-label="Configuración"><svg><use href="#gear"/></svg></button>
    <button class="app run" aria-label="GitHub"><svg><use href="#github"/></svg></button>
    <button class="app run multi" aria-label="Excel"><svg><use href="#excel"/></svg></button>
    <button class="app run" aria-label="Postman"><svg><use href="#postman"/></svg></button>
    <button class="app run multi" aria-label="Power BI"><svg><use href="#powerbi"/></svg></button>
    <button class="app run multi" aria-label="PowerPoint"><svg><use href="#ppt"/></svg></button>
    <button class="app run" aria-label="Símbolo del sistema"><svg><use href="#cmd"/></svg></button>
    <button class="app run" aria-label="Fotos"><svg><use href="#photos"/></svg></button>
    <div class="tray"><time>1:26 p. m.</time></div>
  </footer>
</section>
</main>
</body>
</html>
```

FILE: styles.css
```css
* { box-sizing: border-box; }
body { margin: 0; background: #000; font-family: "Open Sans", "Noto Sans", sans-serif; color: #242424; }
h1, h2, h3, p { margin: 0; }
a { color: inherit; text-decoration: none; }
button { border: 0; padding: 0; margin: 0; background: none; font: inherit; color: inherit; display: inline-flex; align-items: center; justify-content: center; white-space: nowrap; }
svg { display: block; flex: none; fill: none; stroke: currentColor; stroke-width: 1.5; width: 16px; height: 16px; --dot: #ebebeb; }
.sprite { position: absolute; width: 0; height: 0; }
.i10 { width: 10px; height: 10px; }
.i12 { width: 12px; height: 12px; }
.i14 { width: 14px; height: 14px; }
.i16 { width: 16px; height: 16px; }
.i20 { width: 20px; height: 20px; }
.i22 { width: 22px; height: 22px; }
.i24 { width: 24px; height: 24px; }
.i26 { width: 26px; height: 26px; }

.desk { display: grid; grid-template-columns: 6fr 5fr; height: 100vh; }
.screen { display: flex; flex-direction: column; min-width: 0; min-height: 0; overflow: hidden; }

/* Teams title bar */
.titlebar { flex: none; height: 72px; display: grid; grid-template-columns: 1fr 876px 1fr; align-items: center; background: #464a92; color: #a3a5c9; }
.history { display: flex; gap: 24px; padding-left: 19px; }
.history .faint { color: #7f82b5; }
.finder { display: flex; align-items: center; gap: 11px; height: 48px; padding: 0 12px; border-radius: 6px; background: #8283b4; color: #464a92; }
.finder input { flex: 1; border: 0; outline: 0; padding: 0; background: none; font: 19px "Open Sans", sans-serif; color: #464a92; }
.finder input::placeholder { color: #464a92; opacity: 1; }
.winctl { display: flex; align-items: center; justify-content: flex-end; gap: 42px; padding-right: 21px; }
.avatar { position: relative; display: grid; place-items: center; width: 48px; height: 48px; margin: 0 0 0 -16px; border-radius: 50%; background: #9183b4; color: #5f3177; font-size: 18px; font-weight: 600; }
.presence { position: absolute; right: -2px; bottom: -2px; width: 20px; height: 20px; }

/* Teams rail */
.work { flex: 1; min-height: 0; display: flex; }
.rail { flex: none; width: 102px; display: flex; flex-direction: column; padding: 3px 0 12px; background: linear-gradient(90deg, #ebebeb 90%, #dedede); color: #616161; font-size: 14px; line-height: 20px; }
.rail a { height: 84px; display: flex; flex-direction: column; align-items: center; justify-content: center; gap: 4px; padding-bottom: 4px; }
.rail svg { width: 30px; height: 30px; stroke-width: 1.2; }
.rail .on { color: #5b5fc7; box-shadow: inset 3px 0 #ebebeb, inset 6px 0 #5b5fc7; height: 72px; margin: 3px 0 9px; padding-bottom: 0; }
.rail .more svg { width: 24px; height: 24px; }
.rail .bottom { margin-top: auto; height: 72px; padding-bottom: 0; }
.rail .device { height: 60px; margin: 16px 7px 0; border: 1px solid #d1d1d1; border-radius: 6px; background: #f0f0f0; }

/* Calendar */
.calendar { flex: 1; min-width: 0; display: flex; flex-direction: column; background: #f5f5f5; }
.calhead { flex: none; display: flex; align-items: center; gap: 12px; height: 93px; padding: 0 48px 0 30px; border-bottom: 1px solid #ebebeb; }
.tile { display: grid; place-items: center; width: 48px; height: 48px; margin-right: 6px; border-radius: 4px; background: #5b5fc7; color: #fff; }
.tile svg { --dot: #5b5fc7; }
h1 { margin-right: auto; font-size: 26px; font-weight: 600; }
.btn { height: 48px; padding: 0 31px; gap: 15px; border: 1px solid #d1d1d1; border-radius: 6px; background: #fff; font-size: 19px; font-weight: 600; }
.split { display: flex; height: 48px; border-radius: 6px; background: #5b5fc7; color: #fff; font-size: 19px; font-weight: 600; }
.new { width: 218px; gap: 12px; border-right: 1px solid #fff; }
.caret { width: 35px; }
.calbar { flex: none; display: flex; align-items: center; height: 73px; padding: 0 58px 0 59px; font-size: 20px; }
.ghost { gap: 15px; color: #616161; }
.pager { display: flex; gap: 27px; margin: 0 15px 0 48px; color: #424242; }
.range { gap: 16px; font-size: 21px; font-weight: 600; }
.view { margin-left: auto; font-size: 19px; }
.days, .week { display: grid; grid-template-columns: 77px 252fr 514fr 446fr 253fr 252fr 24px; }
.days { flex: none; height: 91px; border-top: 1px solid #c8c8c8; border-bottom: 1px solid #c8c8c8; }
.day { border-left: 1px solid #c8c8c8; padding: 11px 16px 0; color: #616161; font-size: 16px; line-height: 22px; }
.day b { display: block; font-size: 34px; line-height: 48px; font-weight: 400; }
.day.now { background: #fff; color: #5b5fc7; font-weight: 600; }
.day.now b { font-weight: 600; }
.week { flex: 1; min-height: 0; overflow: hidden; }
.hours { display: flex; flex-direction: column; padding-top: 56px; color: #616161; font-size: 16px; line-height: 26px; text-align: center; }
.hours span { flex: none; height: 121px; }
.hours span:nth-child(even) { height: 122px; }
.col { border-left: 1px solid #c8c8c8; background: #fafafa; }
.col.now { background: #fff; }
.pre { height: 56px; background: #f5f5f5; border-bottom: 1px solid #c8c8c8; }
.col.now .pre { background: #fafafa; }
.hour { display: grid; grid-template-rows: 1fr 61px; height: 121px; }
.hour:nth-child(odd) { height: 122px; }
.hour i { position: relative; font-style: normal; border-bottom: 1px solid #c8c8c8; }
.hour i:first-child { border-bottom: 1px dashed #e0e0e0; }
.picked { border: 2px solid #242424; border-radius: 3px; margin-left: -1px; }
.event { position: absolute; inset: 3px 27px 2px 3px; display: grid; grid-template-columns: 1fr 20px; column-gap: 11px; padding: 0 7px 0 6px; border-left: 6px solid #5b5fc7; border-radius: 6px; background: #dce0fa; color: #3d3e78; line-height: 26px; white-space: nowrap; overflow: hidden; }
.event strong { grid-column: 1 / 3; font-size: 17px; font-weight: 600; }
.event span { overflow: hidden; font-size: 17px; }
.event svg { width: 20px; height: 20px; margin-top: 4px; }
.track { background: #f5f5f5; padding: 227px 6px 0; }
.thumb { height: 159px; border-radius: 6px; background: #7a7a7a; }

/* Windows task bar */
.taskbar { flex: none; display: flex; height: 46px; background: #1e1e1e; color: #fff; }
.taskbar button svg { width: 24px; height: 24px; }
.sys { width: 54px; }
.app { width: 57px; padding-top: 3px; border-bottom: 3px solid transparent; }
.app.first { margin-left: 3px; }
.run { background: linear-gradient(#76b9ed, #76b9ed) 50% 100% / 43px 3px no-repeat border-box; }
.run.multi { background: linear-gradient(90deg, #76b9ed 68%, #5b8ebb 68%) 50% 100% / 43px 3px no-repeat border-box; }
.run.active { background: linear-gradient(90deg, #76b9ed 86%, #5b8ebb 86%) 50% 100% / 100% 3px no-repeat border-box, linear-gradient(90deg, #4a4a4a 86%, #383838 86%) border-box; }
.run.hot { background: linear-gradient(#76b9ed, #76b9ed) 50% 100% / 100% 3px no-repeat border-box, #343434 border-box; }
.tray { flex: 1; display: flex; align-items: center; justify-content: flex-end; gap: 14px; padding-right: 37px; font-size: 17px; }
.weather { gap: 12px; margin-right: 16px; font-size: 19px; }
.wicon { position: relative; }
.taskbar .wicon svg { width: 36px; height: 34px; }
.wicon em { position: absolute; right: 0; top: 0; width: 18px; height: 18px; border-radius: 50%; background: #c42b1c; font: 12px/18px "Open Sans", sans-serif; text-align: center; }
.lang { margin: 0 15px 0 4px; }
.tray time { margin-right: 18px; }
.small { height: 30px; }
.small button svg { width: 18px; height: 18px; }
.small .sys { width: 36px; }
.small .app { width: 37px; padding-top: 2px; border-bottom-width: 2px; }
.small .run { background-size: 28px 2px; }
.small .run.active { background-size: 100% 2px, auto; }
.small .tray { padding-right: 9px; font-size: 12px; }
.small .tray time { margin: 0; }

/* Browser */
.browser { padding: 87px 0 93px; }
.strip { flex: none; display: flex; height: 34px; padding-left: 8px; background: #32392c; color: #fff; }
.tabs { flex: 1; min-width: 0; display: grid; grid-template-columns: repeat(18, minmax(0, 1fr)); font-size: 12px; }
.tabs a { display: flex; align-items: center; gap: 8px; padding: 0 8px; background: linear-gradient(#6c7266, #6c7266) 100% 50% / 1px 20px no-repeat; }
.tabs span { flex: 1; min-width: 0; overflow: hidden; white-space: nowrap; -webkit-mask-image: linear-gradient(90deg, #000 70%, transparent); mask-image: linear-gradient(90deg, #000 70%, transparent); }
.tabs .on { background: #505c41; border-radius: 8px 8px 0 0; }
.tabs .x { width: 10px; height: 10px; stroke-width: 3; }
.ctl { width: 269px; display: flex; padding-bottom: 6px; }
.ctl button { width: 46px; }
.ctl .add { margin-right: 39px; padding-top: 6px; }
.ctl .add svg { stroke-width: 3; }
.urlbar { flex: none; display: flex; align-items: center; gap: 16px; height: 37px; padding: 0 14px; background: #505c41; border-bottom: 1px solid #7d8573; color: #fff; }
.urlbar button svg { stroke-width: 2; }
.urlbar .faint { color: #99a08e; }
.omni { flex: 1; min-width: 0; display: flex; align-items: center; gap: 16px; height: 28px; padding: 0 9px 0 11px; border-radius: 14px; background: #404937; color: #c4c8be; font-size: 13px; }
.omni a { flex: 1; min-width: 0; margin-left: -8px; overflow: hidden; white-space: nowrap; }
.omni b { color: #fff; font-weight: 400; }
.who { width: 22px; height: 22px; margin-left: -3px; margin-right: -3px; border-radius: 50%; background: #01579b; font-size: 12px; }

/* Maker studio, dimmed by the open dialog */
.stage { flex: 1; min-height: 0; position: relative; overflow: hidden; }
.studio { height: 100%; display: flex; flex-direction: column; background: #8b8b8b; color: #2b2b2b; }
.brand { flex: none; display: grid; grid-template-columns: 16px 528px 476px 1fr auto; align-items: center; height: 48px; padding: 0 8px 0 16px; background: #471746; color: #a9a9a9; font-size: 14px; }
.name { padding-left: 40px; font-size: 16px; font-weight: 600; }
.seek { height: 32px; margin-left: 8px; padding: 6px 18px; border-radius: 4px; background: #979797; color: #471746; }
.env { display: flex; justify-content: flex-end; gap: 16px; padding-right: 162px; font-size: 11px; align-items: center; }
.env span { height: 38px; line-height: 14px; }
.acts { display: flex; align-items: center; gap: 32px; }
.acts i { width: 32px; height: 32px; margin-left: -7px; border: 1px solid #a9a9a9; border-radius: 50%; }
.bar { flex: none; border-bottom: 1px solid #6f6f6f; background: #999; }
.one { height: 44px; }
.two { height: 43px; display: flex; align-items: center; justify-content: flex-end; padding-right: 12px; background: #8f8f8f; }
.under { flex: 1; min-height: 0; display: flex; }
.siderail { flex: none; width: 49px; display: flex; flex-direction: column; padding: 2px 0 0; background: #908f8c; border-right: 1px solid #7f7f7f; }
.siderail svg { width: 48px; height: 40px; padding: 12px 16px; }
.siderail .on { background: #a0a0a0; color: #742774; }
.siderail .low { margin-top: auto; }
.tree { flex: none; width: 281px; display: flex; flex-direction: column; justify-content: flex-end; background: #8d8d8d; border-right: 1px solid #7c7c7c; overflow: hidden; }
.source { display: flex; gap: 10px; margin: 0 0 -5px 18px; font-size: 11px; line-height: 13px; color: #3c3c3c; }
.teal { display: grid; place-items: center; width: 24px; height: 22px; border-radius: 4px; background: #2c6e69; color: #c6d6d4; }
.canvas { flex: 1; display: flex; flex-direction: column; justify-content: flex-end; background: #808080; }
.foot { display: flex; align-items: center; gap: 10px; height: 36px; padding: 0 23px 0 16px; font-size: 11px; }
.foot input { margin: 0; }
.foot input[type=checkbox] { appearance: none; width: 16px; height: 14px; border: 1px solid #333; }
.foot input[type=range] { appearance: none; width: 160px; height: 4px; background: #2b2b2b; }
.foot input[type=range]::-webkit-slider-thumb { appearance: none; width: 4px; height: 16px; background: #2b2b2b; }
.out { margin-left: auto; }
.pct { margin: 0 16px; }
.props { flex: none; width: 320px; border-left: 2px solid #6a6a6a; padding: 110px 11px 0; display: flex; flex-direction: column; gap: 8px; }
.props i { height: 24px; border: 1px solid #6a6a6a; }

/* Dialog */
.modal { position: absolute; inset: 20px; display: flex; flex-direction: column; background: #fff; box-shadow: 0 25px 58px rgba(0, 0, 0, .22), 0 5px 14px rgba(0, 0, 0, .25); color: #323130; }
.mhead { flex: none; display: flex; align-items: center; justify-content: space-between; height: 60px; padding: 0 25px 0 24px; border-bottom: 1px solid #faf9f8; }
h2, h3 { font-size: 19px; line-height: 26px; font-weight: 600; }
.mhead h2 { padding-top: 3px; }
.mhead button { color: #8f3f97; padding-top: 6px; }
.cmds { flex: none; display: flex; align-items: center; gap: 16px; height: 44px; padding: 0 32px; border-bottom: 1px solid #e6e6e6; box-shadow: 0 2px 3px #f5f5f5; color: #605e5c; font-size: 13px; }
.cmds button { gap: 8px; }
.cmds svg { color: #742774; stroke-width: 1.2; }
.cmds .drop { height: 27px; margin: 0 2px 0 -9px; padding-left: 8px; border-left: 1px solid #c8c6c4; }
.cmds .drop svg { color: #605e5c; }
.tname { flex: none; display: flex; align-items: center; gap: 14px; height: 70px; padding: 0 22px; }
.tname svg { width: 26px; height: 24px; }
.gridrow { flex: 1; min-height: 0; display: flex; align-items: flex-start; padding: 0 16px; }
.gridbox { position: relative; flex: 1; min-width: 0; height: 100%; overflow: hidden; }
table { width: 1575px; table-layout: fixed; border-collapse: separate; border-spacing: 0; font-size: 13px; color: #201f1e; }
.g { width: 33px; }
.s { width: 42px; }
th { height: 43px; padding: 0 12px; border-bottom: 1px solid #e1dfdd; text-align: left; font-size: 12px; font-weight: 400; color: #323130; }
th div { display: flex; align-items: center; gap: 4px; padding-top: 2px; }
.abc { width: 16px; height: 12px; stroke-width: 1; }
th svg { stroke-width: 1; margin-top: -6px; }
th .ar, th .i10, th .ed { margin-top: -2px; color: #605e5c; }
th .i10 { stroke-width: 3; }
th .ar { margin-right: -2px; }
th .ed { margin-left: auto; color: #8a8886; }
.k { background: #f3f2f1; border-left: 1px solid #e1dfdd; }
.nb { border-left-color: #f3f2f1; }
td { height: 42px; padding: 0 12px; border-bottom: 1px solid #e1dfdd; border-left: 1px solid #e1dfdd; white-space: nowrap; overflow: hidden; }
td:first-child { border: 0; }
td:nth-child(2) { border-left: 0; padding: 0 11px; }
td:nth-child(3), td:nth-child(4) { background: #f3f2f1; }
.hover td { background: #f3f2f1; }
.hover .cur { background: #e1dfdd; }
td input { appearance: none; display: block; width: 20px; height: 20px; margin: 0; border: 1px solid #323130; border-radius: 50%; }
td.focus { outline: 2px solid #742774; outline-offset: -2px; }
.vtrack { position: absolute; right: 0; top: 43px; bottom: 0; width: 8px; background: linear-gradient(#979797, #979797) 0 0 / 8px 55px no-repeat #fff; border-radius: 4px 4px 0 0; }
.extra { flex: none; display: flex; align-items: center; width: 148px; height: 43px; border: 1px solid #e1dfdd; border-radius: 4px 4px 0 0; color: #742774; font-size: 13px; font-weight: 600; }
.many { width: 106px; height: 25px; gap: 8px; padding-left: 11px; border-right: 1px solid #e1dfdd; }
.many svg { color: #8a8886; }
.addcol { flex: 1; }
.extra svg { stroke-width: 1.2; }
.mfoot { flex: none; display: flex; align-items: flex-start; justify-content: space-between; padding: 9px 16px 16px 92px; }
.hthumb { width: 643px; height: 8px; border-radius: 4px; background: #979797; }
.mfoot button { width: 81px; height: 32px; border-radius: 2px; background: #742774; color: #fff; font-size: 13px; font-weight: 600; }
```
